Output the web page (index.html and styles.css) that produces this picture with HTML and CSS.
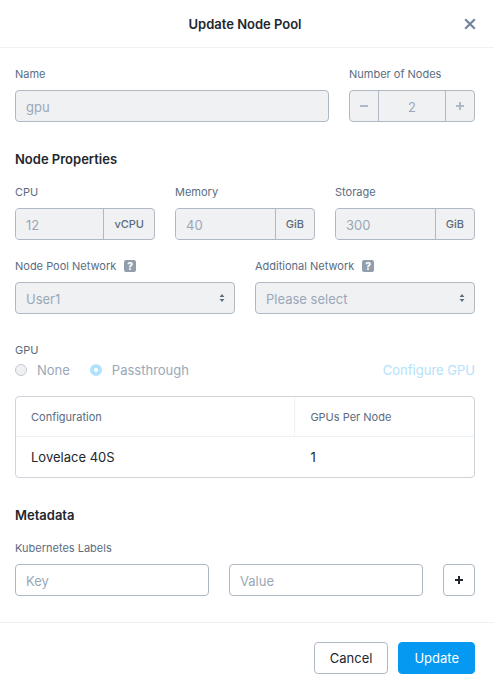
FILE: index.html
```html
<!DOCTYPE html>
<html lang="en">
<head>
<meta charset="utf-8">
<meta name="viewport" content="width=device-width, initial-scale=1">
<title>Update Node Pool</title>
<link rel="stylesheet" href="styles.css">
</head>
<body>
<form class="dialog">
  <header class="dialog-header">
    <h1 class="heading">Update Node Pool</h1>
    <button class="close" type="button" aria-label="Close">
      <svg width="12" height="12" viewBox="0 0 12 12"><path d="M1.2 1.2l9.6 9.6M10.8 1.2l-9.6 9.6" fill="none" stroke="currentColor" stroke-width="2.2"/></svg>
    </button>
  </header>

  <main class="dialog-body">
    <div class="row row-name">
      <div class="field">
        <label class="label" for="name">Name</label>
        <input class="control" id="name" type="text" value="gpu" disabled>
      </div>
      <div class="field">
        <label class="label" for="nodes">Number of Nodes</label>
        <div class="group">
          <button class="step" type="button" aria-label="Decrease" disabled>
            <svg width="10" height="10" viewBox="0 0 10 10"><path d="M1 5h8" fill="none" stroke="currentColor" stroke-width="2"/></svg>
          </button>
          <input class="control count" id="nodes" type="text" value="2" disabled>
          <button class="step" type="button" aria-label="Increase" disabled>
            <svg width="10" height="10" viewBox="0 0 10 10"><path d="M1 5h8M5 1v8" fill="none" stroke="currentColor" stroke-width="2"/></svg>
          </button>
        </div>
      </div>
    </div>

    <h2 class="heading section">Node Properties</h2>
    <div class="row row-thirds">
      <div class="field">
        <label class="label" for="cpu">CPU</label>
        <div class="group">
          <input class="control" id="cpu" type="text" value="12" disabled>
          <span class="unit">vCPU</span>
        </div>
      </div>
      <div class="field">
        <label class="label" for="memory">Memory</label>
        <div class="group">
          <input class="control" id="memory" type="text" value="40" disabled>
          <span class="unit">GiB</span>
        </div>
      </div>
      <div class="field">
        <label class="label" for="storage">Storage</label>
        <div class="group">
          <input class="control" id="storage" type="text" value="300" disabled>
          <span class="unit">GiB</span>
        </div>
      </div>
    </div>

    <div class="row row-halves">
      <div class="field">
        <div class="label-line">
          <label class="label" for="network">Node Pool Network</label>
          <span class="help">?</span>
        </div>
        <div class="select">
          <select class="control" id="network" disabled><option>User1</option></select>
          <svg class="arrows" width="6" height="8" viewBox="0 0 6 8"><path d="M3 0l2.4 3H.6zM3 8l2.4-3H.6z" fill="currentColor"/></svg>
        </div>
      </div>
      <div class="field">
        <div class="label-line">
          <label class="label" for="extra-network">Additional Network</label>
          <span class="help">?</span>
        </div>
        <div class="select">
          <select class="control" id="extra-network" disabled><option>Please select</option></select>
          <svg class="arrows" width="6" height="8" viewBox="0 0 6 8"><path d="M3 0l2.4 3H.6zM3 8l2.4-3H.6z" fill="currentColor"/></svg>
        </div>
      </div>
    </div>

    <fieldset class="gpu">
      <legend class="label">GPU</legend>
      <div class="gpu-line">
        <label class="choice"><input class="radio" type="radio" name="gpu" disabled>None</label>
        <label class="choice"><input class="radio" type="radio" name="gpu" checked disabled>Passthrough</label>
        <a class="configure" href="#" aria-disabled="true">Configure GPU</a>
      </div>
    </fieldset>

    <div class="table-frame">
      <table class="table">
        <thead>
          <tr><th scope="col">Configuration</th><th scope="col">GPUs Per Node</th></tr>
        </thead>
        <tbody>
          <tr><td>Lovelace 40S</td><td>1</td></tr>
        </tbody>
      </table>
    </div>

    <h2 class="heading section">Metadata</h2>
    <label class="label" for="key">Kubernetes Labels</label>
    <div class="row row-labels">
      <input class="control" id="key" type="text" placeholder="Key">
      <input class="control" type="text" placeholder="Value" aria-label="Value">
      <button class="button add" type="button" aria-label="Add label">
        <svg width="8" height="8" viewBox="0 0 8 8"><path d="M0 4h8M4 0v8" fill="none" stroke="currentColor" stroke-width="2"/></svg>
      </button>
    </div>
  </main>

  <footer class="dialog-footer">
    <button class="button" type="button">Cancel</button>
    <button class="button primary" type="submit">Update</button>
  </footer>
</form>
</body>
</html>
```
FILE: styles.css
```css
:root {
  --ink: #22272e;
  --label: #5b6c80;
  --muted: #9aa7b8;
  --border: #afb9c6;
  --line: #f0f1f2;
  --fill: #f0f1f3;
  --blue: #0599f2;
  --pale-blue: #b3e2fc;
}

* {
  box-sizing: border-box;
}

body {
  margin: 0;
  background: #fff;
  color: var(--ink);
  font-family: Inter, "Liberation Sans", sans-serif;
  font-size: 13px;
  line-height: 20px;
}

input,
select,
button {
  font: inherit;
}

.dialog-header {
  display: flex;
  align-items: center;
  height: 48px;
  padding: 0 17px 0 27px;
  border-bottom: 1px solid var(--line);
}

.heading {
  margin: 0;
  font-size: 13px;
  font-weight: 600;
  line-height: 20px;
}

.dialog-header .heading {
  flex: 1;
  text-align: center;
}

.close {
  display: flex;
  padding: 1px;
  border: 0;
  background: none;
  color: #72879b;
}

.dialog-body {
  padding: 16px 19px 26px 15px;
}

.section {
  margin: 27px 0 13px;
}

.row {
  display: grid;
  gap: 20px;
}

.row-name {
  grid-template-columns: 1fr 126px;
}

.row-thirds {
  grid-template-columns: repeat(3, 1fr);
}

.row-halves {
  grid-template-columns: repeat(2, 1fr);
  margin-top: 16px;
}

.row-labels {
  grid-template-columns: 1fr 1fr 32px;
}

.field {
  min-width: 0;
}

.label {
  display: block;
  padding: 0;
  margin-bottom: 6px;
  color: var(--label);
  font-size: 11px;
  line-height: 20px;
}

.label-line {
  display: flex;
  gap: 8px;
}

.help {
  width: 12px;
  height: 12px;
  margin-top: 4px;
  border-radius: 2px;
  background: #919eae;
  color: #fff;
  font-size: 10px;
  font-weight: 800;
  line-height: 12px;
  text-align: center;
}

.control {
  width: 100%;
  min-width: 0;
  height: 32px;
  padding: 2px 10px 0;
  border: 1px solid var(--border);
  border-radius: 4px;
  background: #fff;
  color: var(--ink);
}

.control::placeholder {
  color: var(--muted);
  opacity: 1;
}

.control:disabled {
  background: var(--fill);
  color: var(--muted);
  opacity: 1;
}

.group {
  display: flex;
  height: 32px;
  overflow: hidden;
  border: 1px solid var(--border);
  border-radius: 4px;
  background: var(--fill);
}

.group .control {
  flex: 1;
  height: 30px;
  border: 0;
  border-radius: 0;
}

.group .count {
  border: solid var(--border);
  border-width: 0 1px;
  text-align: center;
}

.step {
  display: grid;
  place-items: center;
  width: 28px;
  padding: 0;
  border: 0;
  background: none;
  color: var(--border);
}

.unit {
  padding: 0 10px;
  border-left: 1px solid var(--border);
  color: var(--label);
  font-size: 11px;
  font-weight: 500;
  line-height: 30px;
}

.select {
  position: relative;
}

.select .control {
  display: block;
  appearance: none;
}

.arrows {
  position: absolute;
  top: 12px;
  right: 10px;
  color: #5a6b7e;
  pointer-events: none;
}

.gpu {
  min-width: 0;
  padding: 0;
  margin: 26px 0 16px;
  border: 0;
}

.gpu .label {
  margin: 0;
}

.gpu-line {
  display: flex;
  gap: 20px;
}

.choice {
  display: flex;
  align-items: center;
  gap: 10px;
  color: var(--muted);
}

.radio {
  width: 12px;
  height: 12px;
  margin: 0;
  appearance: none;
  border: 1px solid #c3cad3;
  border-radius: 50%;
  background: var(--fill);
}

.radio:checked {
  border: 4px solid var(--pale-blue);
  background: #fff;
}

.configure {
  margin-left: auto;
  color: var(--pale-blue);
  text-decoration: none;
}

.table-frame {
  border: 1px solid #cdd4da;
  border-radius: 4px;
}

.table {
  width: 100%;
  border-spacing: 0;
  table-layout: fixed;
}

.table th,
.table td {
  height: 40px;
  padding: 0 15px;
  text-align: left;
}

.table th {
  border-bottom: 1px solid var(--line);
  color: var(--label);
  font-size: 11px;
  font-weight: 400;
}

.table th:first-child {
  width: 61%;
  border-right: 1px solid var(--line);
}

.button {
  height: 32px;
  padding: 0 15px;
  border: 1px solid var(--border);
  border-radius: 4px;
  background: #fff;
  color: var(--ink);
}

.add {
  display: grid;
  place-items: center;
  padding: 0;
}

.primary {
  border-color: var(--blue);
  background: var(--blue);
  color: #fff;
}

.dialog-footer {
  display: flex;
  justify-content: flex-end;
  gap: 10px;
  padding: 19px 19px 18px 15px;
  border-top: 1px solid var(--line);
}
```
